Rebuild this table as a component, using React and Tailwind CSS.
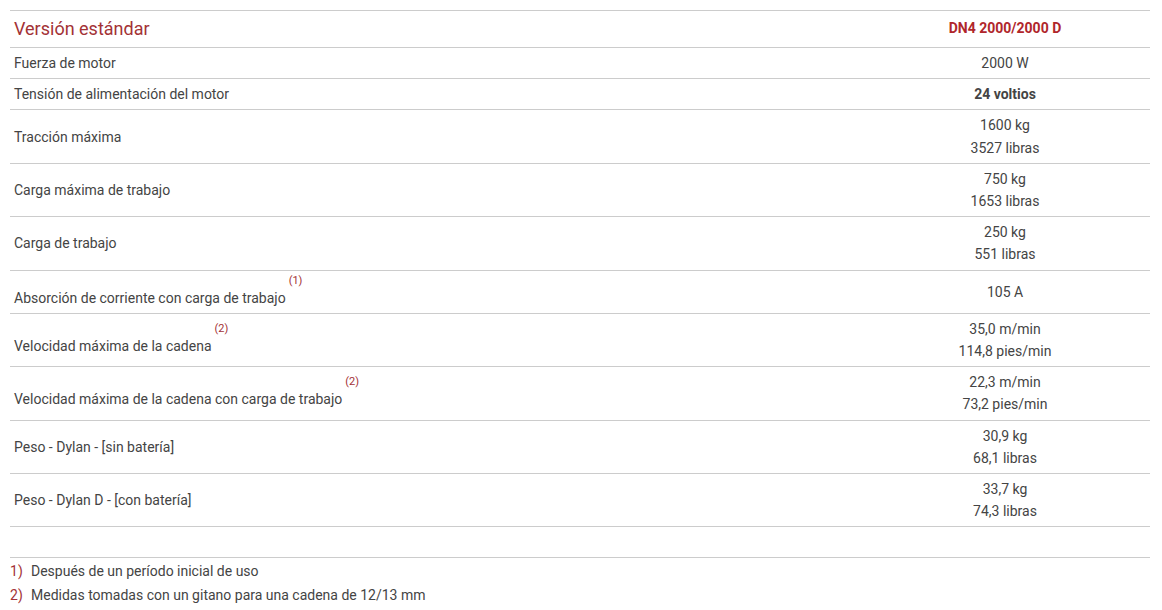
import React from 'react'

// Spec table — Dylan DN4 standard version
const ROWS = [
  { label: 'Fuerza de motor', values: ['2000 W'] },
  { label: 'Tensión de alimentación del motor', values: ['24 voltios'], bold: true },
  { label: 'Tracción máxima', values: ['1600 kg', '3527 libras'] },
  { label: 'Carga máxima de trabajo', values: ['750 kg', '1653 libras'] },
  { label: 'Carga de trabajo', values: ['250 kg', '551 libras'] },
  { label: 'Absorción de corriente con carga de trabajo', note: '(1)', values: ['105 A'] },
  { label: 'Velocidad máxima de la cadena', note: '(2)', values: ['35,0 m/min', '114,8 pies/min'] },
  { label: 'Velocidad máxima de la cadena con carga de trabajo', note: '(2)', values: ['22,3 m/min', '73,2 pies/min'] },
  { label: 'Peso - Dylan - [sin batería]', values: ['30,9 kg', '68,1 libras'] },
  { label: 'Peso - Dylan D - [con batería]', values: ['33,7 kg', '74,3 libras'] },
]

const NOTES = [
  'Después de un período inicial de uso',
  'Medidas tomadas con un gitano para una cadena de 12/13 mm',
]

export default function App() {
  return (
    <div className="min-h-[610px] bg-white px-[10px] pt-[10px] text-[14px] text-[#444] font-['Roboto',sans-serif]">
      <div className="w-[1140px]">
        {/* Header */}
        <div className="flex items-center border-y border-[#ccc] h-[38px] pb-[2px]">
          <div className="flex-1 pl-[4px] text-[18px] text-[#a33236] leading-[27px]">Versión estándar</div>
          <div className="w-[290px] text-center font-bold text-[#b0262b]">DN4 2000/2000 D</div>
        </div>

        {ROWS.map((r) => (
          <div key={r.label} className="flex items-center border-b border-[#ccc] py-[4px] leading-[22.2px]">
            <div className="flex-1 pl-[4px]">
              {r.label}
              {r.note && (
                <span className="inline-block ml-[3px] text-[11px] leading-[12px] text-[#a33236] align-[19px]">{r.note}</span>
              )}
            </div>
            <div className={`w-[290px] text-center ${r.bold ? 'font-bold' : ''}`}>
              {r.values.map((v) => (
                <div key={v}>{v}</div>
              ))}
            </div>
          </div>
        ))}

        {/* Footnotes */}
        <div className="mt-[30px] border-t border-[#ccc] pt-[1px]">
          {NOTES.map((n, i) => (
            <div key={n} className="flex leading-[24px]">
              <span className="w-[21px] text-[#a33236]">{i + 1})</span>
              <span>{n}</span>
            </div>
          ))}
        </div>
      </div>
    </div>
  )
}
